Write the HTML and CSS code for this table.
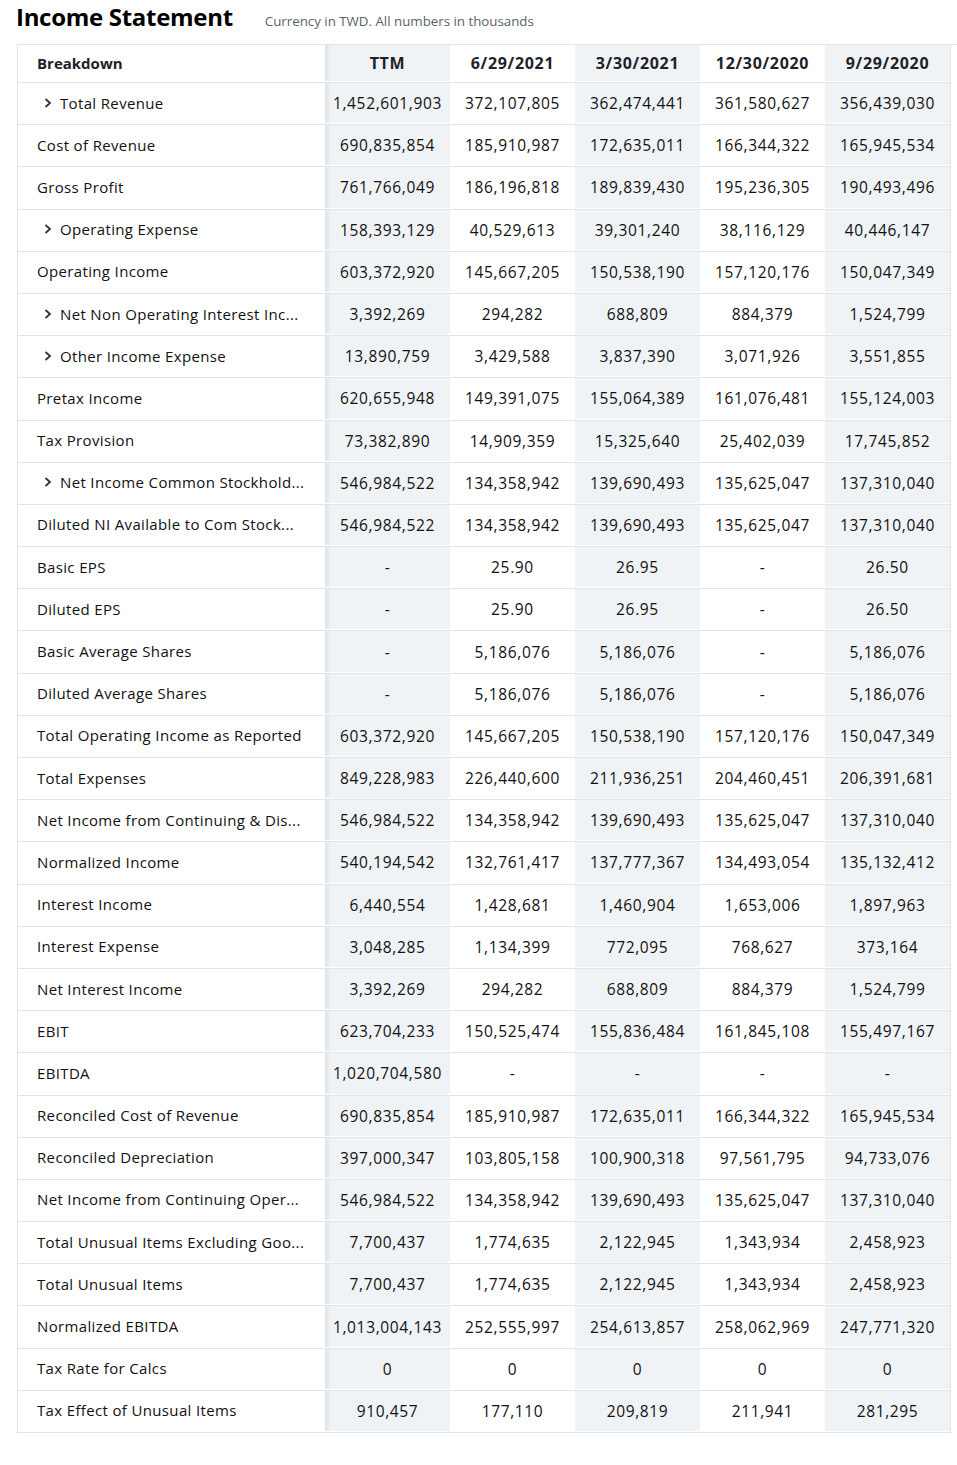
FILE: index.html
```html
<!DOCTYPE html>
<html lang="en">
<head>
<meta charset="utf-8">
<title>Income Statement</title>
<link rel="stylesheet" href="styles.css">
</head>
<body>
<div class="head">
  <h1 class="title">Income Statement</h1>
  <span class="sub">Currency in TWD. All numbers in thousands</span>
</div>
<div class="scroller">
  <div class="table">
    <div class="row hdr">
      <div class="lab">Breakdown</div>
      <div class="c g">TTM</div><div class="c">6/29/2021</div><div class="c g">3/30/2021</div><div class="c">12/30/2020</div><div class="c g">9/29/2020</div>
    </div>
    <div class="row"><div class="lab"><svg class="chev" viewBox="0 0 8 10" width="8" height="10"><path d="M1.5 1L6 5L1.5 9"/></svg>Total Revenue</div><div class="c g">1,452,601,903</div><div class="c">372,107,805</div><div class="c g">362,474,441</div><div class="c">361,580,627</div><div class="c g">356,439,030</div></div>
    <div class="row"><div class="lab">Cost of Revenue</div><div class="c g">690,835,854</div><div class="c">185,910,987</div><div class="c g">172,635,011</div><div class="c">166,344,322</div><div class="c g">165,945,534</div></div>
    <div class="row"><div class="lab">Gross Profit</div><div class="c g">761,766,049</div><div class="c">186,196,818</div><div class="c g">189,839,430</div><div class="c">195,236,305</div><div class="c g">190,493,496</div></div>
    <div class="row"><div class="lab"><svg class="chev" viewBox="0 0 8 10" width="8" height="10"><path d="M1.5 1L6 5L1.5 9"/></svg>Operating Expense</div><div class="c g">158,393,129</div><div class="c">40,529,613</div><div class="c g">39,301,240</div><div class="c">38,116,129</div><div class="c g">40,446,147</div></div>
    <div class="row"><div class="lab">Operating Income</div><div class="c g">603,372,920</div><div class="c">145,667,205</div><div class="c g">150,538,190</div><div class="c">157,120,176</div><div class="c g">150,047,349</div></div>
    <div class="row"><div class="lab"><svg class="chev" viewBox="0 0 8 10" width="8" height="10"><path d="M1.5 1L6 5L1.5 9"/></svg>Net Non Operating Interest Inc...</div><div class="c g">3,392,269</div><div class="c">294,282</div><div class="c g">688,809</div><div class="c">884,379</div><div class="c g">1,524,799</div></div>
    <div class="row"><div class="lab"><svg class="chev" viewBox="0 0 8 10" width="8" height="10"><path d="M1.5 1L6 5L1.5 9"/></svg>Other Income Expense</div><div class="c g">13,890,759</div><div class="c">3,429,588</div><div class="c g">3,837,390</div><div class="c">3,071,926</div><div class="c g">3,551,855</div></div>
    <div class="row"><div class="lab">Pretax Income</div><div class="c g">620,655,948</div><div class="c">149,391,075</div><div class="c g">155,064,389</div><div class="c">161,076,481</div><div class="c g">155,124,003</div></div>
    <div class="row"><div class="lab">Tax Provision</div><div class="c g">73,382,890</div><div class="c">14,909,359</div><div class="c g">15,325,640</div><div class="c">25,402,039</div><div class="c g">17,745,852</div></div>
    <div class="row"><div class="lab"><svg class="chev" viewBox="0 0 8 10" width="8" height="10"><path d="M1.5 1L6 5L1.5 9"/></svg>Net Income Common Stockhold...</div><div class="c g">546,984,522</div><div class="c">134,358,942</div><div class="c g">139,690,493</div><div class="c">135,625,047</div><div class="c g">137,310,040</div></div>
    <div class="row"><div class="lab">Diluted NI Available to Com Stock...</div><div class="c g">546,984,522</div><div class="c">134,358,942</div><div class="c g">139,690,493</div><div class="c">135,625,047</div><div class="c g">137,310,040</div></div>
    <div class="row"><div class="lab">Basic EPS</div><div class="c g">-</div><div class="c">25.90</div><div class="c g">26.95</div><div class="c">-</div><div class="c g">26.50</div></div>
    <div class="row"><div class="lab">Diluted EPS</div><div class="c g">-</div><div class="c">25.90</div><div class="c g">26.95</div><div class="c">-</div><div class="c g">26.50</div></div>
    <div class="row"><div class="lab">Basic Average Shares</div><div class="c g">-</div><div class="c">5,186,076</div><div class="c g">5,186,076</div><div class="c">-</div><div class="c g">5,186,076</div></div>
    <div class="row"><div class="lab">Diluted Average Shares</div><div class="c g">-</div><div class="c">5,186,076</div><div class="c g">5,186,076</div><div class="c">-</div><div class="c g">5,186,076</div></div>
    <div class="row"><div class="lab">Total Operating Income as Reported</div><div class="c g">603,372,920</div><div class="c">145,667,205</div><div class="c g">150,538,190</div><div class="c">157,120,176</div><div class="c g">150,047,349</div></div>
    <div class="row"><div class="lab">Total Expenses</div><div class="c g">849,228,983</div><div class="c">226,440,600</div><div class="c g">211,936,251</div><div class="c">204,460,451</div><div class="c g">206,391,681</div></div>
    <div class="row"><div class="lab">Net Income from Continuing &amp; Dis...</div><div class="c g">546,984,522</div><div class="c">134,358,942</div><div class="c g">139,690,493</div><div class="c">135,625,047</div><div class="c g">137,310,040</div></div>
    <div class="row"><div class="lab">Normalized Income</div><div class="c g">540,194,542</div><div class="c">132,761,417</div><div class="c g">137,777,367</div><div class="c">134,493,054</div><div class="c g">135,132,412</div></div>
    <div class="row"><div class="lab">Interest Income</div><div class="c g">6,440,554</div><div class="c">1,428,681</div><div class="c g">1,460,904</div><div class="c">1,653,006</div><div class="c g">1,897,963</div></div>
    <div class="row"><div class="lab">Interest Expense</div><div class="c g">3,048,285</div><div class="c">1,134,399</div><div class="c g">772,095</div><div class="c">768,627</div><div class="c g">373,164</div></div>
    <div class="row"><div class="lab">Net Interest Income</div><div class="c g">3,392,269</div><div class="c">294,282</div><div class="c g">688,809</div><div class="c">884,379</div><div class="c g">1,524,799</div></div>
    <div class="row"><div class="lab">EBIT</div><div class="c g">623,704,233</div><div class="c">150,525,474</div><div class="c g">155,836,484</div><div class="c">161,845,108</div><div class="c g">155,497,167</div></div>
    <div class="row"><div class="lab">EBITDA</div><div class="c g">1,020,704,580</div><div class="c">-</div><div class="c g">-</div><div class="c">-</div><div class="c g">-</div></div>
    <div class="row"><div class="lab">Reconciled Cost of Revenue</div><div class="c g">690,835,854</div><div class="c">185,910,987</div><div class="c g">172,635,011</div><div class="c">166,344,322</div><div class="c g">165,945,534</div></div>
    <div class="row"><div class="lab">Reconciled Depreciation</div><div class="c g">397,000,347</div><div class="c">103,805,158</div><div class="c g">100,900,318</div><div class="c">97,561,795</div><div class="c g">94,733,076</div></div>
    <div class="row"><div class="lab">Net Income from Continuing Oper...</div><div class="c g">546,984,522</div><div class="c">134,358,942</div><div class="c g">139,690,493</div><div class="c">135,625,047</div><div class="c g">137,310,040</div></div>
    <div class="row"><div class="lab">Total Unusual Items Excluding Goo...</div><div class="c g">7,700,437</div><div class="c">1,774,635</div><div class="c g">2,122,945</div><div class="c">1,343,934</div><div class="c g">2,458,923</div></div>
    <div class="row"><div class="lab">Total Unusual Items</div><div class="c g">7,700,437</div><div class="c">1,774,635</div><div class="c g">2,122,945</div><div class="c">1,343,934</div><div class="c g">2,458,923</div></div>
    <div class="row"><div class="lab">Normalized EBITDA</div><div class="c g">1,013,004,143</div><div class="c">252,555,997</div><div class="c g">254,613,857</div><div class="c">258,062,969</div><div class="c g">247,771,320</div></div>
    <div class="row"><div class="lab">Tax Rate for Calcs</div><div class="c g">0</div><div class="c">0</div><div class="c g">0</div><div class="c">0</div><div class="c g">0</div></div>
    <div class="row"><div class="lab">Tax Effect of Unusual Items</div><div class="c g">910,457</div><div class="c">177,110</div><div class="c g">209,819</div><div class="c">211,941</div><div class="c g">281,295</div></div>
  </div>
</div>
</body>
</html>
```

FILE: styles.css
```css
* { box-sizing: border-box; }
html, body { margin: 0; padding: 0; background: #fff; }
body { font-family: "Open Sans", "Liberation Sans", sans-serif; color: #000; }

.head {
  display: flex;
  align-items: baseline;
  gap: 32px;
  height: 44px;
  padding: 3px 0 0 16px;
}
.title {
  margin: 0;
  font-size: 24px;
  line-height: 28px;
  font-weight: 700;
  letter-spacing: -0.3px;
  color: #000;
}
.sub {
  font-size: 13.3px;
  color: #5b636a;
}

.scroller {
  margin-left: 17px;
  border-top: 1px solid #e0e4e9;
}
.table {
  width: 934px;
  border-left: 1px solid #e0e4e9;
  border-right: 1px solid #e0e4e9;
}
.row {
  display: grid;
  grid-template-columns: 307px repeat(5, 125px);
  height: 42.19px;
  padding-bottom: 1px;
  border-bottom: 1px solid #e0e4e9;
  font-size: 15px;
  color: #111;
}
.row.hdr {
  height: 38px;
  font-weight: 700;
  color: #1d2228;
}
.lab {
  display: flex;
  align-items: center;
  padding-left: 19px;
  padding-bottom: 1px;
  white-space: nowrap;
  letter-spacing: 0.35px;
}
.hdr .lab { letter-spacing: 0; padding-bottom: 0; }
.c {
  display: flex;
  align-items: center;
  justify-content: center;
  white-space: nowrap;
  font-size: 15.5px;
  letter-spacing: 0.65px;
}
.hdr .c { font-size: 16px; letter-spacing: 0.7px; }
.g { background: #f0f3f5; }
.row > .c:nth-child(2) {
  background: linear-gradient(to right, rgba(0, 0, 0, 0.07), rgba(0, 0, 0, 0) 6px), #f0f3f5;
}
.chev {
  margin-left: 7px;
  margin-right: 8px;
  flex: none;
}
.chev path {
  fill: none;
  stroke: #333;
  stroke-width: 1.8;
}
```
